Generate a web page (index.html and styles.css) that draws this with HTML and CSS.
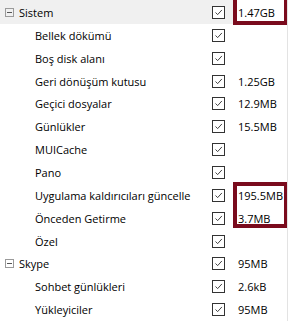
FILE: index.html
```html
<!DOCTYPE html>
<html>
<head>
<meta charset="utf-8">
<link rel="stylesheet" href="styles.css">
<title>Temizleyici</title>
</head>
<body>
<div class="tree">
  <div class="row group selected">
    <span class="label"><span class="toggle"></span>Sistem</span>
    <span class="check"><svg viewBox="0 0 13 13"><path d="M3 6.5 L5.5 9 L10.5 3.5"/></svg></span>
    <span class="size">1.47GB</span>
  </div>
  <div class="row">
    <span class="label">Bellek dökümü</span>
    <span class="check"><svg viewBox="0 0 13 13"><path d="M3 6.5 L5.5 9 L10.5 3.5"/></svg></span>
    <span class="size"></span>
  </div>
  <div class="row">
    <span class="label">Boş disk alanı</span>
    <span class="check"><svg viewBox="0 0 13 13"><path d="M3 6.5 L5.5 9 L10.5 3.5"/></svg></span>
    <span class="size"></span>
  </div>
  <div class="row">
    <span class="label">Geri dönüşüm kutusu</span>
    <span class="check"><svg viewBox="0 0 13 13"><path d="M3 6.5 L5.5 9 L10.5 3.5"/></svg></span>
    <span class="size">1.25GB</span>
  </div>
  <div class="row">
    <span class="label">Geçici dosyalar</span>
    <span class="check"><svg viewBox="0 0 13 13"><path d="M3 6.5 L5.5 9 L10.5 3.5"/></svg></span>
    <span class="size">12.9MB</span>
  </div>
  <div class="row">
    <span class="label">Günlükler</span>
    <span class="check"><svg viewBox="0 0 13 13"><path d="M3 6.5 L5.5 9 L10.5 3.5"/></svg></span>
    <span class="size">15.5MB</span>
  </div>
  <div class="row">
    <span class="label">MUICache</span>
    <span class="check"><svg viewBox="0 0 13 13"><path d="M3 6.5 L5.5 9 L10.5 3.5"/></svg></span>
    <span class="size"></span>
  </div>
  <div class="row">
    <span class="label">Pano</span>
    <span class="check"><svg viewBox="0 0 13 13"><path d="M3 6.5 L5.5 9 L10.5 3.5"/></svg></span>
    <span class="size"></span>
  </div>
  <div class="row">
    <span class="label">Uygulama kaldırıcıları güncelle</span>
    <span class="check"><svg viewBox="0 0 13 13"><path d="M3 6.5 L5.5 9 L10.5 3.5"/></svg></span>
    <span class="size">195.5MB</span>
  </div>
  <div class="row">
    <span class="label">Önceden Getirme</span>
    <span class="check"><svg viewBox="0 0 13 13"><path d="M3 6.5 L5.5 9 L10.5 3.5"/></svg></span>
    <span class="size">3.7MB</span>
  </div>
  <div class="row">
    <span class="label">Özel</span>
    <span class="check"><svg viewBox="0 0 13 13"><path d="M3 6.5 L5.5 9 L10.5 3.5"/></svg></span>
    <span class="size"></span>
  </div>
  <div class="row group">
    <span class="label"><span class="toggle"></span>Skype</span>
    <span class="check"><svg viewBox="0 0 13 13"><path d="M3 6.5 L5.5 9 L10.5 3.5"/></svg></span>
    <span class="size">95MB</span>
  </div>
  <div class="row">
    <span class="label">Sohbet günlükleri</span>
    <span class="check"><svg viewBox="0 0 13 13"><path d="M3 6.5 L5.5 9 L10.5 3.5"/></svg></span>
    <span class="size">2.6kB</span>
  </div>
  <div class="row">
    <span class="label">Yükleyiciler</span>
    <span class="check"><svg viewBox="0 0 13 13"><path d="M3 6.5 L5.5 9 L10.5 3.5"/></svg></span>
    <span class="size">95MB</span>
  </div>

  <!-- red highlight boxes drawn over the sizes -->
  <div class="mark mark-top"></div>
  <div class="mark mark-mid"></div>
</div>
</body>
</html>
```

FILE: styles.css
```css
* {
  box-sizing: border-box;
}

body {
  margin: 0;
  background-color: #ffffff;
  font-family: "Open Sans", "Noto Sans", sans-serif;
  font-size: 11px;
  color: #000000;
}

.tree {
  position: relative;
  width: 288px;
  height: 321px;
  overflow: hidden;
  border-right: 1px solid #e3e3e3;
}

.row {
  display: grid;
  grid-template-columns: 212px 13px 1fr;
  align-items: center;
  height: 22.85px;
}

.row.selected {
  background-color: #f0f0f0;
  margin-right: 54px;
  height: 24px;
}

.label {
  display: flex;
  align-items: center;
  padding-left: 35px;
  white-space: nowrap;
}

.group .label {
  padding-left: 5px;
}

/* the little [-] box in front of a group name */
.toggle {
  width: 9px;
  height: 9px;
  border: 1px solid #9a9a9a;
  margin-right: 5px;
  position: relative;
}

.toggle::after {
  content: "";
  position: absolute;
  left: 1px;
  right: 1px;
  top: 3px;
  height: 1px;
  background-color: #555555;
}

.check {
  width: 13px;
  height: 13px;
  border: 1px solid #333333;
  background-color: #ffffff;
  display: flex;
}

.check svg {
  width: 11px;
  height: 11px;
}

.check path {
  fill: none;
  stroke: #333333;
  stroke-width: 1.1;
}

.size {
  padding-left: 13px;
  white-space: nowrap;
}

.mark {
  position: absolute;
  border: 4px solid #7a0b1d;
}

.mark-top {
  left: 233px;
  top: -4px;
  width: 55px;
  height: 29px;
}

.mark-mid {
  left: 233px;
  top: 182px;
  width: 55px;
  height: 46px;
}
```
